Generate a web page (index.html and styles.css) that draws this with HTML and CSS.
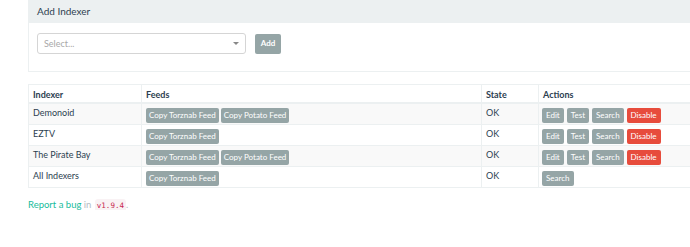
FILE: index.html
```html
<!DOCTYPE html>
<html>
<head>
    <meta charset="UTF-8">
    <title>Jackett</title>
    <link rel="stylesheet" href="styles.css">
</head>
<body>
    <div class="container">
        <div class="panel">
            <div class="panel__heading">Add Indexer</div>
            <div class="panel__body">
                <div class="select">
                    <span class="select__placeholder">Select...</span>
                    <span class="select__caret"></span>
                </div>
                <button class="btn btn--add">Add</button>
            </div>
        </div>

        <table class="indexers">
            <thead>
                <tr>
                    <th class="col-name">Indexer</th>
                    <th class="col-feeds">Feeds</th>
                    <th class="col-state">State</th>
                    <th>Actions</th>
                </tr>
            </thead>
            <tbody>
                <tr>
                    <td>Demonoid</td>
                    <td class="cell-btns"><div class="feeds"><button class="btn">Copy Torznab Feed</button><button class="btn">Copy Potato Feed</button></div></td>
                    <td>OK</td>
                    <td class="cell-btns"><div class="actions"><button class="btn">Edit</button><button class="btn">Test</button><button class="btn">Search</button><button class="btn btn--danger">Disable</button></div></td>
                </tr>
                <tr>
                    <td>EZTV</td>
                    <td class="cell-btns"><div class="feeds"><button class="btn">Copy Torznab Feed</button></div></td>
                    <td>OK</td>
                    <td class="cell-btns"><div class="actions"><button class="btn">Edit</button><button class="btn">Test</button><button class="btn">Search</button><button class="btn btn--danger">Disable</button></div></td>
                </tr>
                <tr>
                    <td>The Pirate Bay</td>
                    <td class="cell-btns"><div class="feeds"><button class="btn">Copy Torznab Feed</button><button class="btn">Copy Potato Feed</button></div></td>
                    <td>OK</td>
                    <td class="cell-btns"><div class="actions"><button class="btn">Edit</button><button class="btn">Test</button><button class="btn">Search</button><button class="btn btn--danger">Disable</button></div></td>
                </tr>
                <tr>
                    <td>All Indexers</td>
                    <td class="cell-btns"><div class="feeds"><button class="btn">Copy Torznab Feed</button></div></td>
                    <td>OK</td>
                    <td class="cell-btns"><div class="actions"><button class="btn">Search</button></div></td>
                </tr>
            </tbody>
        </table>

        <div class="footer">
            <a href="#">Report a bug</a> in <code>v1.9.4</code>.
        </div>
    </div>
</body>
</html>
```

FILE: styles.css
```css
*, *::before, *::after {
    box-sizing: border-box;
}
body {
    margin: 0;
    overflow: hidden;
    font-family: 'Lato', sans-serif;
    font-size: 9px;
    color: #2c3e50;
    background: #fff;
}
.container {
    width: 720px;
    padding-left: 28px;
}
.panel {
    border: 1px solid #ecf0f1;
    border-top: none;
}
.panel__heading {
    height: 23px;
    line-height: 23px;
    padding-left: 8px;
    background-color: #ecf0f1;
    font-size: 10px;
}
.panel__body {
    display: flex;
    align-items: center;
    padding: 10px 8px 17px;
}
.select {
    width: 209px;
    height: 21px;
    border: 1px solid #d5d5d5;
    border-radius: 3px;
    display: flex;
    align-items: center;
    justify-content: space-between;
    padding: 0 6px;
}
.select__placeholder {
    color: #a8a8a8;
    font-size: 9px;
}
.select__caret {
    width: 0;
    height: 0;
    border-left: 3px solid transparent;
    border-right: 3px solid transparent;
    border-top: 3px solid #888;
}
.btn {
    display: block;
    border: none;
    border-radius: 2px;
    background-color: #95a5a6;
    color: #fff;
    font-family: 'Lato', sans-serif;
    font-size: 8px;
    height: 15px;
    line-height: 15px;
    padding: 0 3px;
    margin: 0;
}
.actions .btn {
    padding: 0 4px;
}
.btn--add {
    margin-left: 9px;
    height: 20px;
    width: 26px;
    padding: 0;
    font-weight: bold;
}
.btn--danger {
    background-color: #e74c3c;
}
.feeds,
.actions {
    display: flex;
    gap: 2px;
}
.actions {
    gap: 3px;
}
.indexers {
    margin-top: 12px;
    width: 100%;
    border-collapse: collapse;
}
.indexers th,
.indexers td {
    text-align: left;
    vertical-align: top;
    padding: 3px 4px 0;
    line-height: 12px;
    border-top: 1px solid #ecf0f1;
    border-left: 1px solid #ecf0f1;
    white-space: nowrap;
}
.indexers th {
    padding: 4px 4px 1px;
    border-bottom: 2px solid #ecf0f1;
}
.indexers td.cell-btns {
    padding: 4px 4px 1px;
}
.indexers td.cell-btns:last-child {
    padding-left: 3px;
}
.indexers tbody tr:nth-child(odd) {
    background-color: #f9f9f9;
}
.indexers tbody tr:last-child td {
    border-bottom: 1px solid #ecf0f1;
}
.col-name {
    width: 113px;
}
.col-feeds {
    width: 340px;
}
.col-state {
    width: 57px;
}
.footer {
    margin-top: 11px;
    font-size: 9.5px;
    color: #b4bcc2;
}
.footer a {
    color: #18bc9c;
    text-decoration: none;
}
.footer code {
    font-family: 'DejaVu Sans Mono', monospace;
    font-size: 7.5px;
    color: #c7254e;
    background-color: #f9f2f4;
    border-radius: 3px;
    padding: 2px 2px;
    margin-left: 1px;
}
```
